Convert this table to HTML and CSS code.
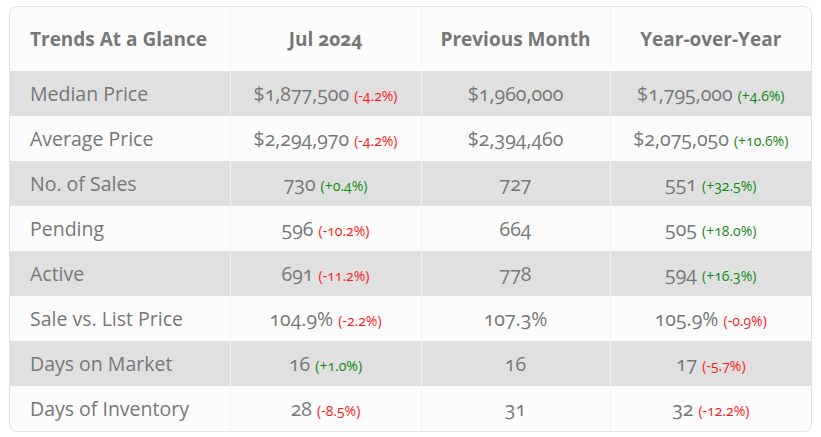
FILE: index.html
```html
<!DOCTYPE html>
<html lang="en">
<head>
<meta charset="utf-8">
<title>Trends At a Glance</title>
<link rel="stylesheet" href="styles.css">
</head>
<body>
<div class="card">
  <table class="trends">
    <colgroup>
      <col class="c1"><col class="c2"><col class="c3"><col class="c4">
    </colgroup>
    <thead>
      <tr>
        <th class="label">Trends At a Glance</th>
        <th>Jul 2024</th>
        <th>Previous Month</th>
        <th>Year-over-Year</th>
      </tr>
    </thead>
    <tbody>
      <tr class="alt">
        <td class="label">Median Price</td>
        <td>$1,877,500 <span class="down">(-4.2%)</span></td>
        <td>$1,960,000</td>
        <td>$1,795,000 <span class="up">(+4.6%)</span></td>
      </tr>
      <tr>
        <td class="label">Average Price</td>
        <td>$2,294,970 <span class="down">(-4.2%)</span></td>
        <td>$2,394,460</td>
        <td>$2,075,050 <span class="up">(+10.6%)</span></td>
      </tr>
      <tr class="alt">
        <td class="label">No. of Sales</td>
        <td>730 <span class="up">(+0.4%)</span></td>
        <td>727</td>
        <td>551 <span class="up">(+32.5%)</span></td>
      </tr>
      <tr>
        <td class="label">Pending</td>
        <td>596 <span class="down">(-10.2%)</span></td>
        <td>664</td>
        <td>505 <span class="up">(+18.0%)</span></td>
      </tr>
      <tr class="alt">
        <td class="label">Active</td>
        <td>691 <span class="down">(-11.2%)</span></td>
        <td>778</td>
        <td>594 <span class="up">(+16.3%)</span></td>
      </tr>
      <tr>
        <td class="label">Sale vs. List Price</td>
        <td>104.9% <span class="down">(-2.2%)</span></td>
        <td>107.3%</td>
        <td>105.9% <span class="down">(-0.9%)</span></td>
      </tr>
      <tr class="alt">
        <td class="label">Days on Market</td>
        <td>16 <span class="up">(+1.0%)</span></td>
        <td>16</td>
        <td>17 <span class="down">(-5.7%)</span></td>
      </tr>
      <tr>
        <td class="label">Days of Inventory</td>
        <td>28 <span class="down">(-8.5%)</span></td>
        <td>31</td>
        <td>32 <span class="down">(-12.2%)</span></td>
      </tr>
    </tbody>
  </table>
</div>
</body>
</html>
```
FILE: styles.css
```css
html, body {
  background: #ffffff;
}
body {
  margin: 6px 9px;
  font-family: "Open Sans", "Lato", sans-serif;
  font-variant-numeric: oldstyle-nums;
  color: #777777;
}
.card {
  width: 803px;
  box-sizing: border-box;
  border: 1px solid #e4e4e4;
  border-radius: 8px;
  overflow: hidden;
  background: #fcfcfc;
  box-shadow: 0 1px 2px rgba(0,0,0,0.04);
}
.trends {
  width: 100%;
  border-collapse: collapse;
  table-layout: fixed;
}
.c1 { width: 220px; }
.c2 { width: 191px; }
.c3 { width: 189px; }
.c4 { width: 201px; }
.trends th,
.trends td {
  text-align: center;
  border-right: 1px solid #f3f3f3;
  padding: 0 4px;
  white-space: nowrap;
}
.trends th:last-child,
.trends td:last-child {
  border-right: none;
}
.trends th {
  height: 64px;
  font-size: 19px;
  font-weight: 700;
  color: #777777;
}
.trends td {
  height: 45px;
  font-size: 19.5px;
  font-weight: 400;
}
.trends .label {
  text-align: left;
  padding-left: 20px;
}
.trends tr.alt td {
  background: #e0e0e0;
}
.up,
.down {
  font-size: 14px;
}
.up { color: #138a13; }
.down { color: #ff1a1a; }
```
